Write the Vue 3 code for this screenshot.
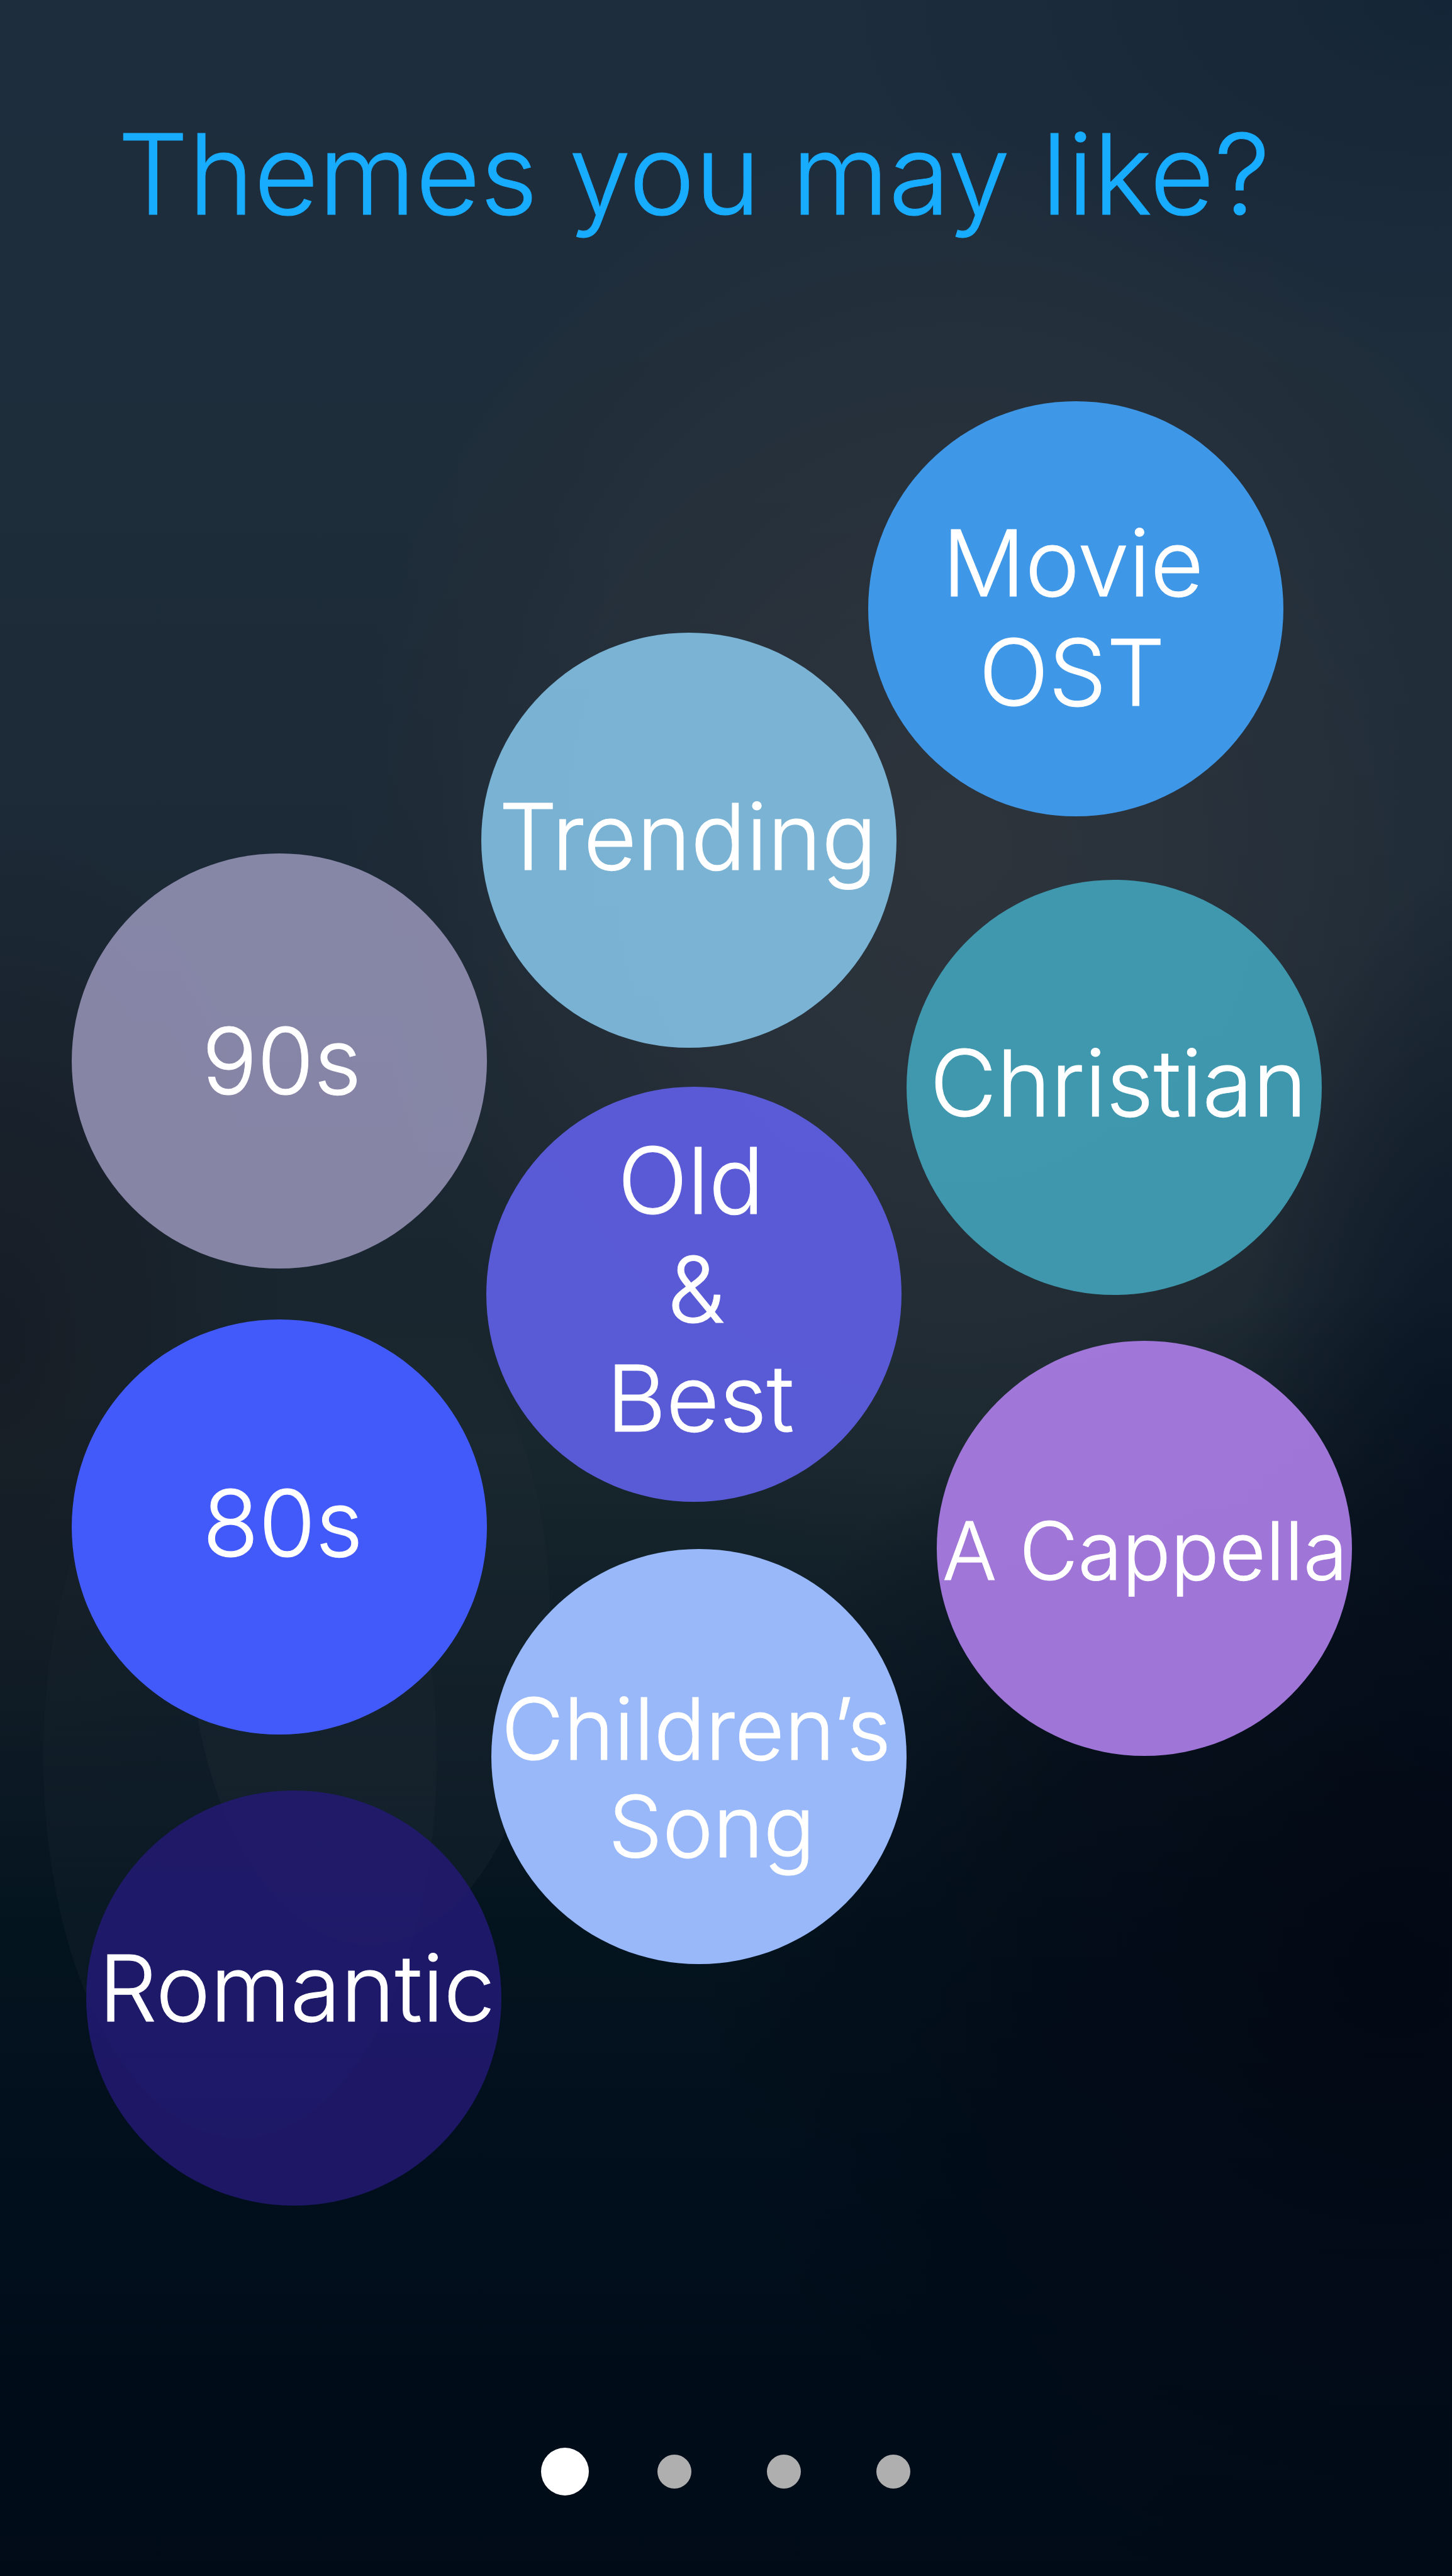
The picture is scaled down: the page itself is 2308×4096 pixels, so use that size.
<script setup>
import { ref } from 'vue'

const CANVAS_WIDTH = 2308

const themes = [
  { id: 'movie', x: 1380, y: 241, size: 'large', lines: [{ text: 'Movie', x: 118, y: 170 }, { text: 'OST', x: 176, y: 344 }] },
  { id: 'trending', x: 765, y: 609, size: 'large', lines: [{ text: 'Trending', x: 28, y: 237 }] },
  { id: 'nineties', x: 114, y: 960, size: 'large', lines: [{ text: '90s', x: 207, y: 243 }] },
  { id: 'christian', x: 1441, y: 1002, size: 'large', lines: [{ text: 'Christian', x: 37, y: 236 }] },
  { id: 'oldies', x: 773, y: 1331, size: 'large', lines: [{ text: 'Old', x: 209, y: 62 }, { text: '&', x: 288, y: 235 }, { text: 'Best', x: 191, y: 408 }] },
  { id: 'eighties', x: 114, y: 1701, size: 'large', lines: [{ text: '80s', x: 208, y: 237 }] },
  { id: 'acappella', x: 1489, y: 1735, size: 'small', lines: [{ text: 'A Cappella', x: 9, y: 247 }] },
  { id: 'children', x: 781, y: 2066, size: 'medium', lines: [{ text: 'Children’s', x: 16, y: 199 }, { text: 'Song', x: 186, y: 354 }] },
  { id: 'romantic', x: 137, y: 2450, size: 'large', lines: [{ text: 'Romantic', x: 20, y: 227 }] }
]

const picked = ref([])
const page = ref(1)

function toggle(id) {
  picked.value = picked.value.includes(id)
    ? picked.value.filter((p) => p !== id)
    : [...picked.value, id]
}
</script>

<template>
  <main class="screen">
    <header class="head">
      <h1 class="title">Themes you may like?</h1>
    </header>

    <section class="canvas" aria-label="Themes">
      <button
        v-for="t in themes"
        :key="t.id"
        type="button"
        class="bubble"
        :class="[t.id, t.size]"
        :aria-pressed="picked.includes(t.id)"
        :style="{ left: (t.x / CANVAS_WIDTH) * 100 + '%', top: t.y + 'px' }"
        @click="toggle(t.id)"
      >
        <span
          v-for="line in t.lines"
          :key="line.text"
          class="line"
          :style="{ left: line.x + 'px', top: line.y + 'px' }"
        >{{ line.text }}</span>
      </button>
    </section>

    <nav class="pager" aria-label="Steps">
      <button
        v-for="n in 4"
        :key="n"
        type="button"
        class="step"
        :aria-label="'Step ' + n"
        :aria-current="page === n ? 'step' : undefined"
        @click="page = n"
      >
        <span class="dot" :class="{ active: page === n }"></span>
      </button>
    </nav>
  </main>
</template>

<style>
body {
  margin: 0;
  background: #000a16;
}
</style>

<style scoped>
.screen {
  position: relative;
  display: flex;
  flex-direction: column;
  box-sizing: border-box;
  min-height: 100vh;
  overflow: hidden;
  font-family: Inter, "Open Sans", sans-serif;
  font-weight: 300;
  background:
    radial-gradient(ellipse 44% 14% at 100% 0%, rgba(19, 36, 54, 0.85), rgba(19, 36, 54, 0)),
    radial-gradient(ellipse 48% 26% at 96% 76%, rgba(2, 7, 18, 0.85), rgba(2, 8, 20, 0.6) 50%, rgba(2, 8, 20, 0)),
    radial-gradient(ellipse 15% 24% at 100% 58%, rgba(6, 17, 36, 0.8), rgba(6, 17, 36, 0)),
    radial-gradient(ellipse 20% 20% at 0% 52%, rgba(22, 25, 34, 0.7), rgba(22, 25, 34, 0)),
    radial-gradient(ellipse 42% 28% at 66% 33%, #2d343c, rgba(45, 52, 60, 0.7) 45%, rgba(45, 52, 60, 0)),
    linear-gradient(180deg, #1e2d3d 0%, #1e2d3a 18%, #1c2a37 32%, #1a2630 46%, #18262d 56%, #0d1b25 66%, #04141f 75%, #010f1c 84%, #000b17 100%);
}

.screen::before,
.screen::after {
  content: "";
  position: absolute;
  border-radius: 50%;
  background: linear-gradient(180deg, rgba(255, 245, 235, 0), rgba(255, 245, 235, 0.03));
}

.screen::before {
  left: 13%;
  top: 2047px;
  width: 574px;
  height: 1045px;
}

.screen::after {
  left: 3%;
  top: 2190px;
  width: 625px;
  height: 1210px;
}

.head {
  padding: 157px 187px 0;
}

.title {
  margin: 0;
  font-size: 177px;
  font-weight: 300;
  line-height: 240px;
  color: #18acff;
  -webkit-text-stroke: 1px currentColor;
}

.canvas {
  position: relative;
  z-index: 1;
  height: 3200px;
}

.bubble {
  position: absolute;
  width: 660px;
  height: 660px;
  padding: 0;
  border: 0;
  border-radius: 50%;
  font: inherit;
  color: #fff;
  cursor: pointer;
}

.line {
  position: absolute;
  line-height: 174px;
  white-space: nowrap;
  -webkit-text-stroke: 1px currentColor;
}

.large .line { font-size: 146px; }
.medium .line { font-size: 136px; }
.small .line { font-size: 128px; }

.movie { background: rgba(65, 158, 242, 0.94); }
.trending { background: rgba(127, 187, 222, 0.94); }
.nineties { background: rgba(146, 144, 180, 0.9); }
.christian { background: rgba(65, 158, 181, 0.94); }
.oldies { background: rgba(94, 94, 224, 0.94); }
.eighties { background: #435afa; }
.acappella { background: rgba(169, 124, 227, 0.94); }
.children { background: #98b8f9; }
.romantic { background: rgba(35, 25, 118, 0.83); }

.pager {
  display: flex;
  justify-content: center;
  margin-top: auto;
  padding: 0 0 128px 10px;
}

.step {
  display: flex;
  align-items: center;
  justify-content: center;
  width: 174px;
  height: 76px;
  padding: 0;
  border: 0;
  background: none;
  cursor: pointer;
}

.dot {
  width: 54px;
  height: 54px;
  border-radius: 50%;
  background: #afafaf;
}

.dot.active {
  width: 76px;
  height: 76px;
  background: #fff;
}
</style>
